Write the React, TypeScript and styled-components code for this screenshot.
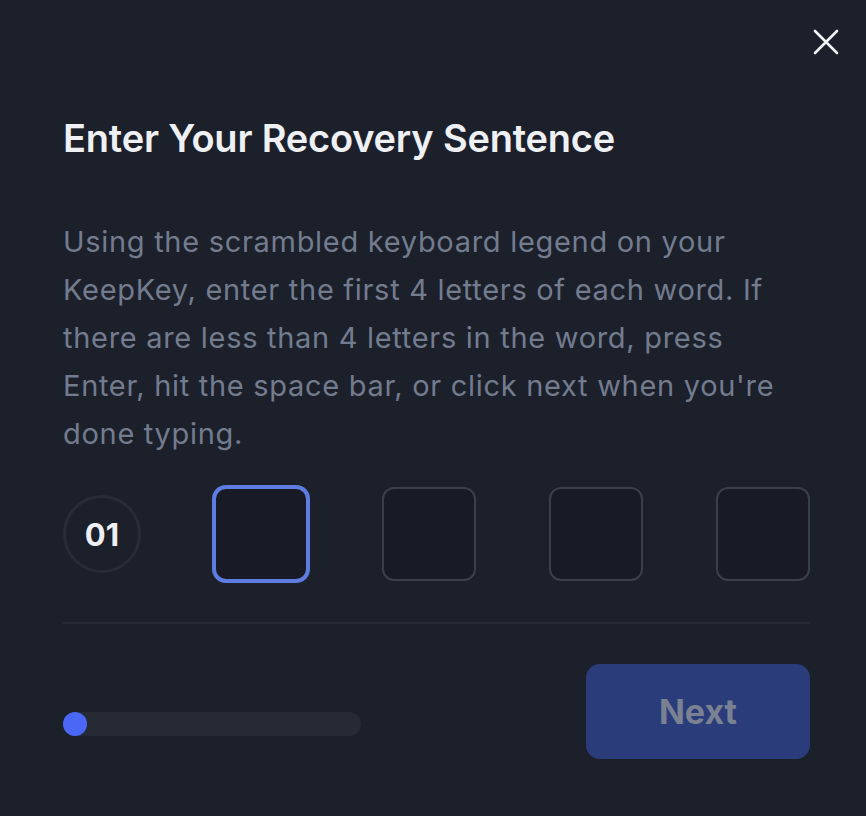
import React from "react";
import styled, { createGlobalStyle } from "styled-components";

const GlobalStyle = createGlobalStyle`
  html, body {
    margin: 0;
    padding: 0;
    background: #1c202b;
  }
  body {
    font-family: Inter, "Noto Sans", sans-serif;
  }
`;

const Modal = styled.div`
  position: relative;
  width: 866px;
  height: 816px;
  box-sizing: border-box;
  padding: 116px 56px 0 63px;
  background: #1c202b;
`;

const CloseButton = styled.button`
  position: absolute;
  top: 24px;
  right: 22px;
  width: 36px;
  height: 36px;
  padding: 0;
  border: none;
  background: transparent;
  display: flex;
  align-items: center;
  justify-content: center;
  cursor: pointer;
`;

const Title = styled.h2`
  margin: 0;
  font-size: 38px;
  line-height: 44px;
  font-weight: 600;
  letter-spacing: -0.2px;
  color: #eef0f3;
`;

const Description = styled.p`
  margin: 58px 0 0;
  font-size: 29px;
  line-height: 48px;
  letter-spacing: 0.7px;
  font-weight: 400;
  color: #737c8e;
`;

const InputRow = styled.div`
  display: flex;
  align-items: center;
  justify-content: space-between;
  margin-top: 29px;
  padding-bottom: 41px;
  border-bottom: 2px solid #252a35;
`;

const WordIndex = styled.div`
  width: 78px;
  height: 78px;
  box-sizing: border-box;
  border: 3px solid #282c37;
  border-radius: 50%;
  display: flex;
  align-items: center;
  justify-content: center;
  font-size: 31px;
  font-weight: 700;
  color: #eef0f3;
`;

const LetterBox = styled.input<{ $focused?: boolean }>`
  width: 94px;
  height: 94px;
  box-sizing: border-box;
  border-radius: 12px;
  background: #181b25;
  border: 2px solid ${(p) => (p.$focused ? "#5e7ce2" : "#3b3f4a")};
  box-shadow: ${(p) => (p.$focused ? "0 0 0 2px #5e7ce2" : "none")};
  outline: none;
  color: #eef0f3;
  font-size: 32px;
  text-align: center;
  font-family: inherit;
`;

const Footer = styled.div`
  display: flex;
  align-items: center;
  justify-content: space-between;
  margin-top: 40px;
`;

const ProgressTrack = styled.div`
  width: 298px;
  height: 24px;
  border-radius: 12px;
  background: #262a35;
  margin-top: 24px;
`;

const ProgressDot = styled.div`
  width: 24px;
  height: 24px;
  border-radius: 50%;
  background: #4a68f5;
`;

const NextButton = styled.button`
  width: 224px;
  height: 95px;
  border: none;
  border-radius: 14px;
  background: #2b3c7b;
  color: #7a8192;
  font-family: inherit;
  font-size: 34px;
  font-weight: 700;
  cursor: not-allowed;
`;

export default function App() {
  return (
    <>
      <GlobalStyle />
      <Modal>
        <CloseButton aria-label="Close">
          <svg width="26" height="26" viewBox="0 0 26 26">
            <path
              d="M2 2 L24 24 M24 2 L2 24"
              stroke="#f2f3f5"
              strokeWidth="2.6"
              strokeLinecap="round"
            />
          </svg>
        </CloseButton>
        <Title>Enter Your Recovery Sentence</Title>
        <Description>
          Using the scrambled keyboard legend on your KeepKey, enter the first 4
          letters of each word. If there are less than 4 letters in the word,
          press Enter, hit the space bar, or click next when you're done typing.
        </Description>
        <InputRow>
          <WordIndex>01</WordIndex>
          <LetterBox $focused />
          <LetterBox />
          <LetterBox />
          <LetterBox />
        </InputRow>
        <Footer>
          <ProgressTrack>
            <ProgressDot />
          </ProgressTrack>
          <NextButton disabled>Next</NextButton>
        </Footer>
      </Modal>
    </>
  );
}
